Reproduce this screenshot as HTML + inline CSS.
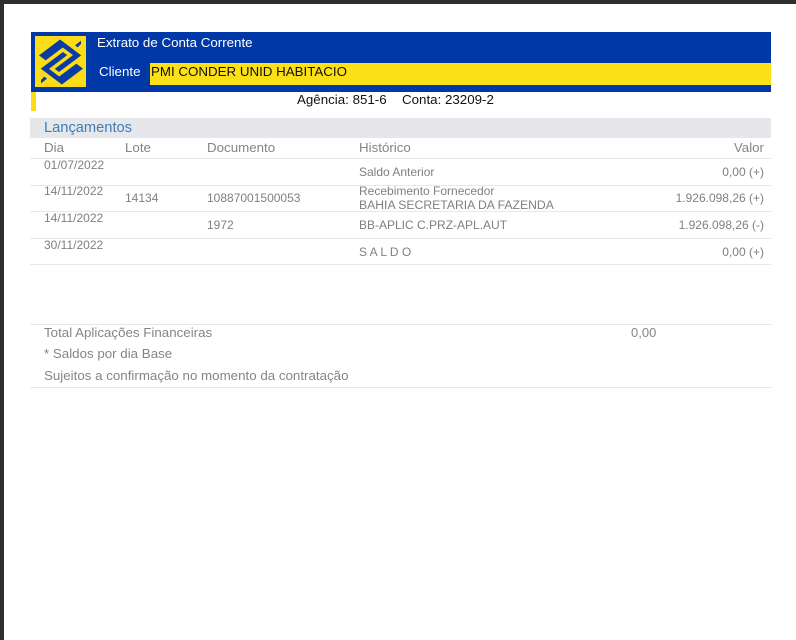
<!DOCTYPE html>
<html lang="pt-BR">
<head>
<meta charset="utf-8">
<title>Extrato de Conta Corrente</title>
<style>
html,body{margin:0;padding:0;width:796px;height:640px;overflow:hidden;background:#fff;}
body{position:relative;font-family:"Liberation Sans",sans-serif;}
.b{position:absolute;}
.t{position:absolute;white-space:nowrap;line-height:16px;height:16px;color:#808080;font-size:12px;}
.h{font-size:13.33px;color:#858585;}
.w{font-size:13.33px;color:#fff;}
.k{font-size:13.33px;color:#111;}
.r{text-align:right;right:32px;}
.l{position:absolute;left:30px;width:741px;height:1px;background:#e8e8e8;}
</style>
</head>
<body>
<div class="b" style="left:0;top:0;width:796px;height:4px;background:#2e2e2e"></div>
<div class="b" style="left:0;top:0;width:4px;height:640px;background:#2e2e2e"></div>

<div class="b" style="left:31px;top:32px;width:740px;height:60px;background:#0038a8"></div>
<div class="b" style="left:35px;top:36px;width:51px;height:51px;background:#fbdc16"></div>
<svg class="b" style="left:35px;top:36px" width="52" height="52" viewBox="0 0 156 156">
  <g fill="#0a3ca6">
    <path d="M12 58 L75.3 10.5 L138.7 58 L72 108 L59.3 98.5 L114 57.5 L83.3 34.5 L32 73 Z"/>
    <path d="M12 58 L75.3 10.5 L138.7 58 L72 108 L59.3 98.5 L114 57.5 L83.3 34.5 L32 73 Z" transform="rotate(180 78 78)"/>
    <path d="M120 28 L138 14 L138 24 L128 34 Z"/>
    <path d="M120 28 L138 14 L138 24 L128 34 Z" transform="rotate(180 78 78)"/>
  </g>
</svg>

<div class="t w" style="left:97px;top:35px">Extrato de Conta Corrente</div>
<div class="t w" style="left:99px;top:64px">Cliente</div>
<div class="b" style="left:150px;top:63px;width:621px;height:22px;background:#fbdf17"></div>
<div class="t k" style="left:151px;top:64px">PMI CONDER UNID HABITACIO</div>

<div class="b" style="left:31px;top:92px;width:5px;height:19px;background:#fbdc16"></div>
<div class="t k" style="left:297px;top:92px">Agência: 851-6</div>
<div class="t k" style="left:402px;top:92px">Conta: 23209-2</div>

<div class="b" style="left:30px;top:118px;width:741px;height:20px;background:#e5e7ea"></div>
<div class="t" style="left:44px;top:120px;color:#3f7cb8;font-size:14.67px">Lançamentos</div>

<div class="t h" style="left:44px;top:140px">Dia</div>
<div class="t h" style="left:125px;top:140px">Lote</div>
<div class="t h" style="left:207px;top:140px">Documento</div>
<div class="t h" style="left:359px;top:140px">Histórico</div>
<div class="t h r" style="top:140px">Valor</div>
<div class="l" style="top:158px"></div>

<div class="t" style="left:44px;top:157px">01/07/2022</div>
<div class="t" style="left:359px;top:164px">Saldo Anterior</div>
<div class="t r" style="top:164px">0,00 (+)</div>
<div class="l" style="top:185px"></div>

<div class="t" style="left:44px;top:183px">14/11/2022</div>
<div class="t" style="left:125px;top:190px">14134</div>
<div class="t" style="left:207px;top:190px">10887001500053</div>
<div class="t" style="left:359px;top:183px">Recebimento Fornecedor</div>
<div class="t" style="left:359px;top:197px;font-size:12.2px">BAHIA SECRETARIA DA FAZENDA</div>
<div class="t r" style="top:190px">1.926.098,26 (+)</div>
<div class="l" style="top:211px"></div>

<div class="t" style="left:44px;top:210px">14/11/2022</div>
<div class="t" style="left:207px;top:217px">1972</div>
<div class="t" style="left:359px;top:217px">BB-APLIC C.PRZ-APL.AUT</div>
<div class="t r" style="top:217px">1.926.098,26 (-)</div>
<div class="l" style="top:238px"></div>

<div class="t" style="left:44px;top:237px">30/11/2022</div>
<div class="t" style="left:359px;top:244px">S A L D O</div>
<div class="t r" style="top:244px">0,00 (+)</div>
<div class="l" style="top:264px"></div>

<div class="l" style="top:324px"></div>
<div class="t h" style="left:44px;top:325px">Total Aplicações Financeiras</div>
<div class="t h" style="left:631px;top:325px;font-size:13px">0,00</div>
<div class="t h" style="left:44px;top:346px">* Saldos por dia Base</div>
<div class="t h" style="left:44px;top:368px">Sujeitos a confirmação no momento da contratação</div>
<div class="l" style="top:387px"></div>
</body>
</html>
